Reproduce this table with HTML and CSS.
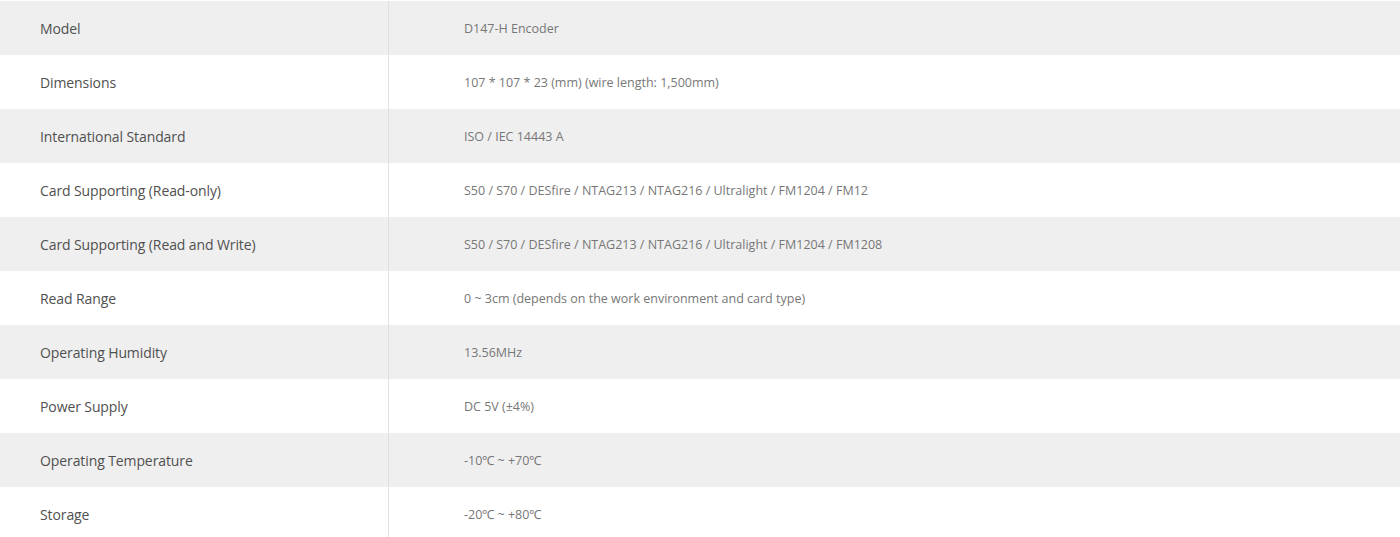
FILE: index.html
```html
<!DOCTYPE html>
<html>
<head>
<meta charset="utf-8">
<link rel="stylesheet" href="styles.css">
</head>
<body>
<div class="wrap">
<table class="spec">
<tbody>
<tr><th>Model</th><td>D147-H Encoder</td></tr>
<tr><th>Dimensions</th><td>107 * 107 * 23 (mm) (wire length: 1,500mm)</td></tr>
<tr><th>International Standard</th><td>ISO / IEC 14443 A</td></tr>
<tr><th>Card Supporting (Read-only)</th><td>S50 / S70 / DESfire / NTAG213 / NTAG216 / Ultralight / FM1204 / FM12</td></tr>
<tr><th>Card Supporting (Read and Write)</th><td>S50 / S70 / DESfire / NTAG213 / NTAG216 / Ultralight / FM1204 / FM1208</td></tr>
<tr><th>Read Range</th><td>0 ~ 3cm (depends on the work environment and card type)</td></tr>
<tr><th>Operating Humidity</th><td>13.56MHz</td></tr>
<tr><th>Power Supply</th><td>DC 5V (±4%)</td></tr>
<tr><th>Operating Temperature</th><td>-10℃ ~ +70℃</td></tr>
<tr><th>Storage</th><td>-20℃ ~ +80℃</td></tr>
</tbody>
</table>
</div>
</body>
</html>
```
FILE: styles.css
```css
html, body {
  margin: 0;
  padding: 0;
  background: #fff;
}
.wrap {
  padding-top: 1px;
}
.spec {
  width: 100%;
  border-collapse: collapse;
  font-family: "Open Sans", sans-serif;
}
.spec tr {
  height: 54px;
}
.spec tr:nth-child(odd) {
  background: #efefef;
}
.spec th {
  width: 348px;
  padding: 0 0 0 40px;
  text-align: left;
  font-weight: normal;
  font-size: 14px;
  letter-spacing: -0.1px;
  color: #505050;
  border-right: 1px solid #e0e0e0;
}
.spec td {
  padding: 0 0 0 75px;
  font-size: 12.5px;
  letter-spacing: 0;
  color: #777;
}
```
